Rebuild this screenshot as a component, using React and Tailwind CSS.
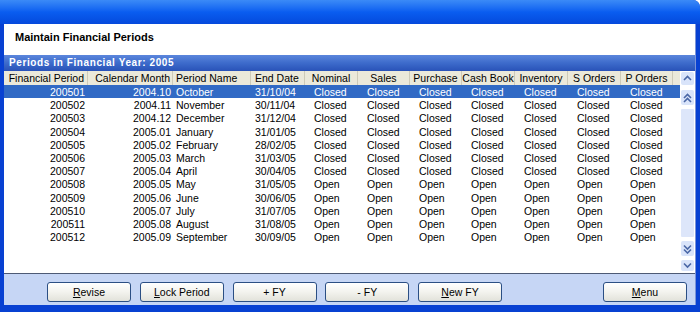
const rows = [
  ['200501', '2004.10', 'October', '31/10/04', 'Closed'],
  ['200502', '2004.11', 'November', '30/11/04', 'Closed'],
  ['200503', '2004.12', 'December', '31/12/04', 'Closed'],
  ['200504', '2005.01', 'January', '31/01/05', 'Closed'],
  ['200505', '2005.02', 'February', '28/02/05', 'Closed'],
  ['200506', '2005.03', 'March', '31/03/05', 'Closed'],
  ['200507', '2005.04', 'April', '30/04/05', 'Closed'],
  ['200508', '2005.05', 'May', '31/05/05', 'Open'],
  ['200509', '2005.06', 'June', '30/06/05', 'Open'],
  ['200510', '2005.07', 'July', '31/07/05', 'Open'],
  ['200511', '2005.08', 'August', '31/08/05', 'Open'],
  ['200512', '2005.09', 'September', '30/09/05', 'Open'],
];

const modules = ['Nominal', 'Sales', 'Purchase', 'Cash Book', 'Inventory', 'S Orders', 'P Orders'];

const cols = 'grid grid-cols-[84px_85px_78px_54px_53px_52px_52px_53px_53px_53px_52px_7px]';

function Chevron({ up, double }) {
  const d = up ? 'M1 5 L4.5 1.5 L8 5' : 'M1 1.5 L4.5 5 L8 1.5';
  return (
    <svg width="9" height={double ? 10 : 7} viewBox={double ? '0 0 9 10' : '0 0 9 7'} className="block">
      <path d={d} fill="none" stroke="#4a67a6" strokeWidth="1.6" />
      {double && <path d={d} transform="translate(0 4)" fill="none" stroke="#4a67a6" strokeWidth="1.6" />}
    </svg>
  );
}

function SBtn({ up, double, h }) {
  return (
    <div className={`${h} rounded-[2px] bg-[#d9e4fa] flex items-center justify-center`}>
      <Chevron up={up} double={double} />
    </div>
  );
}

function Btn({ children, className = '' }) {
  return (
    <button className={`h-[20px] w-[84px] rounded-[3px] border border-[#2b4f84] bg-gradient-to-b from-[#ffffff] via-[#f3f3ee] to-[#e2e2da] text-[10.5px] text-black leading-none ${className}`}>
      {children}
    </button>
  );
}

export default function App() {
  return (
    <div className="w-[700px] h-[312px] flex flex-col bg-[#0841d2] rounded-tr-[7px] overflow-hidden" style={{ fontFamily: '"Liberation Sans", Arial, sans-serif' }}>
      <div className="h-[24px] shrink-0 bg-gradient-to-b from-[#3b8af7] via-[#0a5df0] to-[#0549dc]" />
      <div className="flex-1 flex flex-col mx-[4px] border-r border-[#7c95d8]">
        <div className="h-[31px] bg-white pl-[11px] pt-[6px] text-[11px] font-bold text-black leading-[14px]">
          Maintain Financial Periods
        </div>
        <div className="h-[16px] bg-gradient-to-b from-[#5b86dc] via-[#3d6bcb] to-[#2952b8] pl-[5px] text-[10px] font-bold text-white leading-[16px] tracking-[0.6px]">
          Periods in Financial Year: 2005
        </div>
        <div className="h-[202px] flex bg-white border-b border-[#4d5a75] box-content">
          <div className="w-[676px] flex flex-col text-[10.5px] text-black">
            <div className={`${cols} h-[14px] bg-[#ebe9da] leading-[14px]`}>
              <div className="border-r border-[#cdcab8] text-right pr-[3px] whitespace-nowrap overflow-hidden">Financial Period</div>
              <div className="border-r border-[#cdcab8] text-right pr-[2px] whitespace-nowrap overflow-hidden">Calendar Month</div>
              <div className="border-r border-[#cdcab8] pl-[3px] whitespace-nowrap overflow-hidden">Period Name</div>
              <div className="border-r border-[#cdcab8] pl-[4px] whitespace-nowrap overflow-hidden">End Date</div>
              {modules.map(m => (
                <div key={m} className="border-r border-[#cdcab8] flex justify-center whitespace-nowrap overflow-hidden">
                  <span className="shrink-0">{m}</span>
                </div>
              ))}
              <div />
            </div>
            {rows.map((r, i) => (
              <div key={r[0]} className={`${cols} h-[13.2px] leading-[14px] ${i === 0 ? 'bg-[#316ac5] text-white' : ''}`}>
                <div className="text-right pr-[3px]">{r[0]}</div>
                <div className="text-right pr-[2px]">{r[1]}</div>
                <div className="pl-[3px]">{r[2]}</div>
                <div className="pl-[4px]">{r[3]}</div>
                {modules.map(m => (
                  <div key={m} className="pl-[9px]">{r[4]}</div>
                ))}
                <div />
              </div>
            ))}
          </div>
          <div className="w-[15px] flex flex-col px-[1px] pt-[1px] pb-[2px]">
            <SBtn up h="h-[13px]" />
            <div className="mt-[5px]"><SBtn up double h="h-[15px]" /></div>
            <div className="mt-[4px] flex-1 bg-[#dde6fa] rounded-[1px]" />
            <div className="mt-[4px]"><SBtn double h="h-[15px]" /></div>
            <div className="mt-[4px]"><SBtn h="h-[11px]" /></div>
          </div>
        </div>
        <div className="h-[31px] bg-[#c6d6f5] flex items-start pt-[8px] pl-[43px] pr-[8px] gap-[8.75px]">
          <Btn><span className="underline">R</span>evise</Btn>
          <Btn><span className="underline">L</span>ock Period</Btn>
          <Btn>+ FY</Btn>
          <Btn>- FY</Btn>
          <Btn><span className="underline">N</span>ew FY</Btn>
          <Btn className="ml-auto"><span className="underline">M</span>enu</Btn>
        </div>
      </div>
      <div className="h-[7px] shrink-0" />
    </div>
  );
}
